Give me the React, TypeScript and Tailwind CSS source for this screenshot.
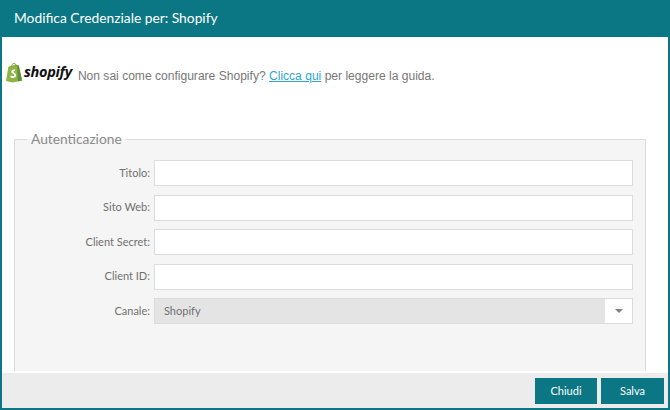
const fields = ['Titolo', 'Sito Web', 'Client Secret', 'Client ID'];

const ShopifyBag = () => (
  <svg width="17" height="21" viewBox="0 0 18 21" className="shrink-0">
    <path d="M2.5 4.5 L10 2 L13.5 3 L17 19 L7 21 L0 19.5 Z" fill="#8db543" />
    <path d="M12 2.5 L13.5 3 L17 19 L12.5 20 Z" fill="#5e8e3e" />
    <path d="M5.5 5 C5.8 2.5 7 .8 8.5 .8 C10 .8 10.6 2 10.6 4" fill="none" stroke="#7aa03a" strokeWidth="1" />
    <path d="M9.8 7.6 C8 7 5.6 7.6 5.6 9.8 C5.6 11.8 8.6 11.8 8.6 13.4 C8.6 14.6 6.6 14.6 5 13.6 L4.5 15.6 C6.6 16.8 10.6 16.6 10.8 13.4 C11 11 8 10.8 8 9.7 C8 9 9 8.9 9.4 9.2 Z" fill="#fff" />
  </svg>
);

const App = () => {
  return (
    <div className="w-[670px] h-[410px] flex flex-col overflow-hidden bg-white border-x-2 border-b-2 border-[#0b7785] font-['Lato',sans-serif]">
      <header className="-mx-0.5 h-[37px] shrink-0 flex items-center pl-3.5 bg-[#0b7785] text-white text-[13.8px]">
        Modifica Credenziale per: Shopify
      </header>

      <div className="h-[95px] shrink-0 flex items-start pl-1 pt-[25px]">
        <ShopifyBag />
        <span className="ml-px mt-px text-[14.5px] leading-[18px] font-bold italic tracking-[-0.3px] text-[#111] font-['Open_Sans',sans-serif]">
          shopify
        </span>
        <p className="ml-[6px] mt-[6px] text-[12.07px] leading-[16px] text-[#777] font-['Liberation_Sans',sans-serif]">
          Non sai come configurare Shopify?{' '}
          <a className="text-[#2fa6cf] underline">Clicca qui</a> per leggere la guida.
        </p>
      </div>

      <main className="flex-1 min-h-0 pl-3 pr-[22px]">
        <fieldset className="h-full border-x border-t border-[#dcdcdc] bg-[#f5f5f5] -mt-[2px]">
          <legend className="ml-3 px-1 text-[13.75px] leading-[18px] text-[#8a8a8a]">Autenticazione</legend>
          <div className="flex flex-col gap-[8.5px] pt-3 pr-3 text-[11px] text-[#707070]">
            {fields.map(label => (
              <div key={label} className="flex items-center gap-1">
                <label className="w-[135px] text-right whitespace-nowrap">{label}:</label>
                <input className="flex-1 h-[26px] bg-white border border-[#dcdcdc]" />
              </div>
            ))}
            <div className="flex items-center gap-1">
              <label className="w-[135px] text-right whitespace-nowrap">Canale:</label>
              <div className="flex-1 h-[26px] flex border border-[#dcdcdc] bg-white">
                <div className="flex-1 flex items-center pl-[9px] bg-[#e4e4e4]">Shopify</div>
                <div className="w-[27px] flex items-center justify-center">
                  <div className="border-x-[4px] border-t-[4px] border-x-transparent border-t-[#808080]" />
                </div>
              </div>
            </div>
          </div>
        </fieldset>
      </main>

      <footer className="h-[35px] shrink-0 flex items-start justify-end gap-1 pt-[5px] pr-1 bg-[#ececec]">
        <button className="w-[62px] h-[26px] bg-[#0b7785] text-white text-[11px]">Chiudi</button>
        <button className="w-[63px] h-[26px] bg-[#0b7785] text-white text-[11px]">Salva</button>
      </footer>
    </div>
  );
};

export default App;
